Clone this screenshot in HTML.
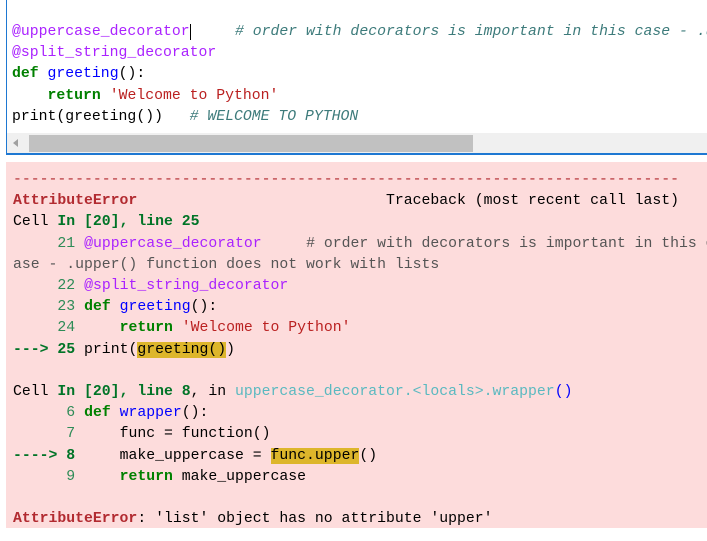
<!DOCTYPE html>
<html><head><style>
body{margin:0;background:#fff;width:707px;height:541px;overflow:hidden;font-family:"Liberation Mono",monospace;font-size:14.8px;}
.ed{position:absolute;left:6px;top:0;width:701px;height:153px;border-left:1px solid #1e78d2;border-bottom:2px solid #1e78d2;background:#fff;overflow:hidden;}
.code{position:absolute;left:5px;top:22px;line-height:21.2px;white-space:pre;}
.sb{position:absolute;left:0;top:133px;width:701px;height:20px;background:#f0f0f0;}
.th{position:absolute;left:22px;top:2px;width:444px;height:17px;background:#c1c1c1;}
.err{position:absolute;left:6px;top:162px;width:701px;height:366px;background:#fddcdc;overflow:hidden;}
.et{position:absolute;left:7px;top:8px;line-height:21.2px;white-space:pre;color:#000;}
.dec{color:#aa22ff}.kw{color:#008000;font-weight:bold}.fn{color:#0000ff}.st{color:#ba2121}.cm{color:#3d7b7b;font-style:italic}
.r{color:#b22b31;font-weight:bold}.rd{color:#b22b31}.g{color:#007427;font-weight:bold}.ln{color:#2e8b57}.cy{color:#5ab9c0}.hl{background:#ddb62b}.gr{color:#555}
</style></head><body>
<div class="ed">
<div class="code"><span class="dec">@uppercase_decorator</span><span style="border-left:1px solid #000"></span>     <span class="cm"># order with decorators is important in this case - .upper() function does not work with lists</span>
<span class="dec">@split_string_decorator</span>
<span class="kw">def</span> <span class="fn">greeting</span>():
    <span class="kw">return</span> <span class="st">'Welcome to Python'</span>
print(greeting())   <span class="cm"># WELCOME TO PYTHON</span></div>
<div class="sb"><div style="position:absolute;left:6px;top:6px;width:0;height:0;border-top:4px solid transparent;border-bottom:4px solid transparent;border-right:5px solid #a0a0a0"></div><div class="th"></div></div>
</div>
<div class="err"><div class="et"><span class="rd">---------------------------------------------------------------------------</span>
<span class="r">AttributeError</span>                            Traceback (most recent call last)
Cell <span class="g">In [20], line 25</span>
<span class="ln">     21</span> <span class="dec">@uppercase_decorator</span>     <span class="gr"># order with decorators is important in this c</span>
<span class="gr">ase - .upper() function does not work with lists</span>
<span class="ln">     22</span> <span class="dec">@split_string_decorator</span>
<span class="ln">     23</span> <span class="kw">def</span> <span class="fn">greeting</span>():
<span class="ln">     24</span>     <span class="kw">return</span> <span class="st">'Welcome to Python'</span>
<span class="g">---&gt; 25</span> print(<span class="hl">greeting()</span>)

Cell <span class="g">In [20], line 8</span>, in <span class="cy">uppercase_decorator.&lt;locals&gt;.wrapper</span><span class="fn">()</span>
<span class="ln">      6</span> <span class="kw">def</span> <span class="fn">wrapper</span>():
<span class="ln">      7</span>     func = function()
<span class="g">----&gt; 8</span>     make_uppercase = <span class="hl">func.upper</span>()
<span class="ln">      9</span>     <span class="kw">return</span> make_uppercase

<span class="r">AttributeError</span>: 'list' object has no attribute 'upper'</div></div>
</body></html>
